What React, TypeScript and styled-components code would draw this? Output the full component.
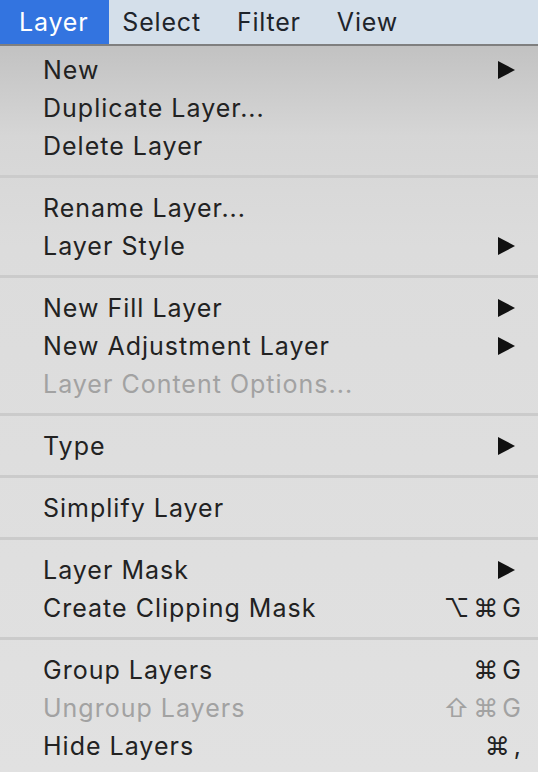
import React from "react";
import styled, { createGlobalStyle } from "styled-components";

const Global = createGlobalStyle`
  html, body { margin: 0; padding: 0; background: #dedede; }
  body { font-family: "Inter", "Liberation Sans", sans-serif; -webkit-font-smoothing: antialiased; }
`;

const Screen = styled.div`
  width: 538px;
  height: 772px;
  overflow: hidden;
  display: flex;
  flex-direction: column;
`;

const MenuBar = styled.div`
  height: 44px;
  display: flex;
  align-items: stretch;
  background: #d4dfea;
  border-bottom: 2px solid #7f7f7f;
  flex-shrink: 0;
`;

const BarItem = styled.div<{ $active?: boolean }>`
  display: flex;
  align-items: center;
  padding-left: ${(p) => (p.$active ? "19px" : "16px")};
  padding-right: ${(p) => (p.$active ? "21px" : "20px")};
  font-size: 25px;
  letter-spacing: 0.8px;
  color: ${(p) => (p.$active ? "#ffffff" : "#1e242b")};
  background: ${(p) => (p.$active ? "#3374e0" : "transparent")};
  &:nth-child(2) {
    padding-left: 13px;
  }
`;

const Menu = styled.div`
  flex: 1;
  padding-top: 5px;
  background: linear-gradient(180deg, #c2c2c2 0px, #d6d6d6 90px, #dcdcdc 200px, #e1e1e1 726px);
  display: flex;
  flex-direction: column;
`;

const Row = styled.div<{ $disabled?: boolean }>`
  height: 38px;
  display: flex;
  align-items: center;
  padding: 0 16px 0 43px;
  font-size: 25px;
  letter-spacing: 1px;
  color: ${(p) => (p.$disabled ? "#a2a2a2" : "#222222")};
`;

const Label = styled.span`
  flex: 1;
`;

const Shortcut = styled.span<{ $disabled?: boolean }>`
  font-family: "Inter", "DejaVu Sans", sans-serif;
  font-size: 25px;
  color: ${(p) => (p.$disabled ? "#a2a2a2" : "#222222")};
  display: flex;
  align-items: center;
  gap: 3px;
`;

const Key = styled.span`
  display: inline-block;
`;

const Arrow = styled.svg`
  width: 17px;
  height: 18px;
  margin-right: 7px;
  flex-shrink: 0;
`;

const Separator = styled.div`
  height: 3px;
  margin: 10px 0 11px;
  background: #cbcbcb;
`;

type Item = {
  label: string;
  sub?: boolean;
  disabled?: boolean;
  shortcut?: string[];
};

const sections: Item[][] = [
  [{ label: "New", sub: true }, { label: "Duplicate Layer..." }, { label: "Delete Layer" }],
  [{ label: "Rename Layer..." }, { label: "Layer Style", sub: true }],
  [
    { label: "New Fill Layer", sub: true },
    { label: "New Adjustment Layer", sub: true },
    { label: "Layer Content Options...", disabled: true },
  ],
  [{ label: "Type", sub: true }],
  [{ label: "Simplify Layer" }],
  [{ label: "Layer Mask", sub: true }, { label: "Create Clipping Mask", shortcut: ["⌥", "⌘", "G"] }],
  [
    { label: "Group Layers", shortcut: ["⌘", "G"] },
    { label: "Ungroup Layers", shortcut: ["⇧", "⌘", "G"], disabled: true },
    { label: "Hide Layers", shortcut: ["⌘", ","] },
  ],
];

const SubArrow = () => (
  <Arrow viewBox="0 0 17 18">
    <polygon points="0,0 17,9 0,18" fill="#111" />
  </Arrow>
);

export default function App() {
  return (
    <Screen>
      <Global />
      <MenuBar>
        <BarItem $active>Layer</BarItem>
        <BarItem>Select</BarItem>
        <BarItem>Filter</BarItem>
        <BarItem>View</BarItem>
      </MenuBar>
      <Menu>
        {sections.map((sec, i) => (
          <React.Fragment key={i}>
            {i > 0 && <Separator />}
            {sec.map((it) => (
              <Row key={it.label} $disabled={it.disabled}>
                <Label>{it.label}</Label>
                {it.sub && <SubArrow />}
                {it.shortcut && (
                  <Shortcut $disabled={it.disabled}>
                    {it.shortcut.map((k, j) => (
                      <Key key={j}>{k}</Key>
                    ))}
                  </Shortcut>
                )}
              </Row>
            ))}
          </React.Fragment>
        ))}
      </Menu>
    </Screen>
  );
}
